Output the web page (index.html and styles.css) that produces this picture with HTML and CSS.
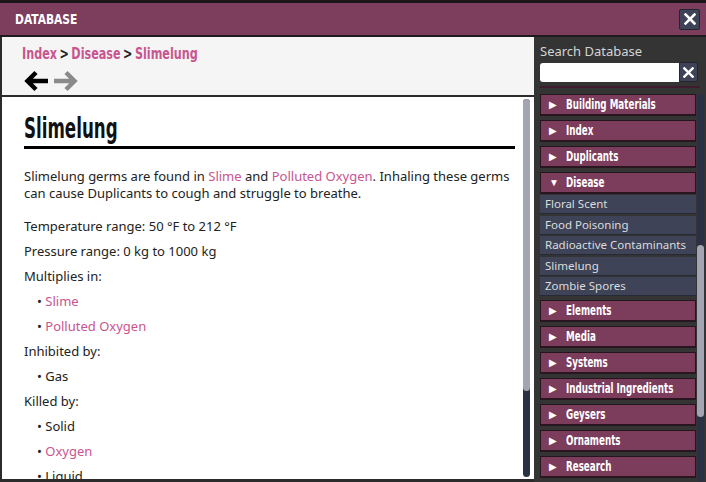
FILE: index.html
```html
<!DOCTYPE html>
<html lang="en">
<head>
  <meta charset="UTF-8" />
  <title>Database</title>
  <link rel="stylesheet" href="styles.css">
</head>
<body>
  <div class="window">
    <!-- Title Bar -->
    <div class="titlebar">
      <span class="title pixel">DATABASE</span>
      <button class="close-btn" aria-label="Close">
        <svg width="12" height="12" viewBox="0 0 12 12"><path d="M1.5 1.5 L10.5 10.5 M10.5 1.5 L1.5 10.5" stroke="#fff" stroke-width="2.6" stroke-linecap="square"/></svg>
      </button>
    </div>

    <div class="panes">
      <!-- Left: Article -->
      <div class="main">
        <div class="crumbs">
          <div class="crumb-path pixel">
            <a href="#">Index</a><span class="sep">&gt;</span><a href="#">Disease</a><span class="sep">&gt;</span><a href="#">Slimelung</a>
          </div>
          <div class="nav-arrows">
            <svg width="27" height="22" viewBox="0 0 27 22"><path d="M6 11 H26 M14 2.5 L5.5 11 L14 19.5" fill="none" stroke="#000" stroke-width="4.5"/></svg>
            <svg width="27" height="22" viewBox="0 0 27 22"><path d="M1 11 H21 M13 2.5 L21.5 11 L13 19.5" fill="none" stroke="#8a8a8a" stroke-width="4.5"/></svg>
          </div>
        </div>

        <div class="content">
          <div class="article">
            <h1><span class="pixel">Slimelung</span></h1>
            <p class="intro">Slimelung germs are found in <a href="#">Slime</a> and <a href="#">Polluted Oxygen</a>. Inhaling these germs can cause Duplicants to cough and struggle to breathe.</p>
            <div class="line">Temperature range: 50 °F to 212 °F</div>
            <div class="line">Pressure range: 0 kg to 1000 kg</div>
            <div class="line">Multiplies in:</div>
            <div class="line bullet">• <a href="#">Slime</a></div>
            <div class="line bullet">• <a href="#">Polluted Oxygen</a></div>
            <div class="line">Inhibited by:</div>
            <div class="line bullet">• Gas</div>
            <div class="line">Killed by:</div>
            <div class="line bullet">• Solid</div>
            <div class="line bullet">• <a href="#">Oxygen</a></div>
            <div class="line bullet">• Liquid</div>
          </div>
          <div class="scrollbar main-scroll">
            <div class="thumb"></div>
          </div>
        </div>
      </div>

      <!-- Right: Sidebar -->
      <div class="sidebar">
        <div class="search-label">Search Database</div>
        <div class="search-row">
          <input type="text" class="search-input">
          <button class="clear-btn" aria-label="Clear">
            <svg width="11" height="11" viewBox="0 0 12 12"><path d="M1.5 1.5 L10.5 10.5 M10.5 1.5 L1.5 10.5" stroke="#fff" stroke-width="2.6" stroke-linecap="square"/></svg>
          </button>
        </div>
        <div class="divider"></div>

        <div class="list-wrap">
          <ul class="cat-list">
            <li class="cat"><span class="tri">&#9654;</span><span class="pixel">Building Materials</span></li>
            <li class="cat"><span class="tri">&#9654;</span><span class="pixel">Index</span></li>
            <li class="cat"><span class="tri">&#9654;</span><span class="pixel">Duplicants</span></li>
            <li class="cat open"><span class="tri">&#9660;</span><span class="pixel">Disease</span></li>
            <li class="sub">Floral Scent</li>
            <li class="sub">Food Poisoning</li>
            <li class="sub">Radioactive Contaminants</li>
            <li class="sub">Slimelung</li>
            <li class="sub last">Zombie Spores</li>
            <li class="cat"><span class="tri">&#9654;</span><span class="pixel">Elements</span></li>
            <li class="cat"><span class="tri">&#9654;</span><span class="pixel">Media</span></li>
            <li class="cat"><span class="tri">&#9654;</span><span class="pixel">Systems</span></li>
            <li class="cat"><span class="tri">&#9654;</span><span class="pixel">Industrial Ingredients</span></li>
            <li class="cat"><span class="tri">&#9654;</span><span class="pixel">Geysers</span></li>
            <li class="cat"><span class="tri">&#9654;</span><span class="pixel">Ornaments</span></li>
            <li class="cat"><span class="tri">&#9654;</span><span class="pixel">Research</span></li>
          </ul>
          <div class="scrollbar side-scroll">
            <div class="thumb"></div>
          </div>
        </div>
      </div>
    </div>
  </div>
</body>
</html>
```

FILE: styles.css
```css
/* Reset and Base Styles */
* {
  margin: 0;
  padding: 0;
  box-sizing: border-box;
}
body {
  font-family: "Noto Sans", sans-serif;
  background-color: #1b1719;
  color: #222;
  width: 706px;
  height: 482px;
  overflow: hidden;
}
a {
  color: #c8558f;
  text-decoration: none;
}

/* Condensed "game" lettering */
.pixel {
  display: inline-block;
  font-family: "DejaVu Sans Condensed", "DejaVu Sans", sans-serif;
  font-weight: bold;
  white-space: nowrap;
  transform-origin: left center;
}

/* Window Frame */
.window {
  height: 100%;
  padding-top: 3px;
  display: flex;
  flex-direction: column;
}
.titlebar {
  height: 34px;
  background-color: #7d3d5d;
  border-bottom: 2px solid #1e1a1d;
  padding: 0 6px 0 15px;
  display: flex;
  align-items: center;
  justify-content: space-between;
}
.title {
  font-size: 14px;
  color: #fff;
  transform: scaleX(0.85);
}
.close-btn,
.clear-btn {
  width: 21px;
  height: 21px;
  background-color: #3e4357;
  border: 1px solid #23252f;
  border-radius: 2px;
  display: flex;
  align-items: center;
  justify-content: center;
}

.panes {
  flex: 1;
  display: flex;
  min-height: 0;
}

/* Left Article Pane */
.main {
  width: 536px;
  border-left: 2px solid #2b2b2b;
  border-bottom: 3px solid #2b2b2b;
  display: flex;
  flex-direction: column;
}
.crumbs {
  height: 60px;
  background-color: #f5f5f5;
  border-bottom: 2px solid #2b2b2b;
  padding: 5px 20px 0;
}
.crumb-path {
  font-size: 15px;
  line-height: 18px;
  transform: scaleX(0.83);
}
.crumb-path .sep {
  color: #222;
  margin: 0 3px;
}
.nav-arrows {
  margin-top: 6px;
  display: flex;
  gap: 4px;
}

.content {
  flex: 1;
  background-color: #fff;
  display: flex;
  min-height: 0;
  overflow: hidden;
}
.article {
  flex: 1;
  padding: 14px 8px 0 22px;
  font-size: 13px;
}
.article h1 {
  font-size: 29px;
  line-height: 32px;
  color: #111;
  padding-bottom: 2px;
  border-bottom: 3px solid #000;
}
.article h1 .pixel {
  transform: scaleX(0.64);
}
.intro {
  margin-top: 19px;
  line-height: 17px;
  margin-bottom: 12px;
}
.line {
  line-height: 25px;
  white-space: nowrap;
}
.bullet {
  padding-left: 13px;
}

/* Scrollbars */
.scrollbar {
  width: 7px;
  border-radius: 4px;
  background-color: #2b3145;
  display: flex;
  flex-direction: column;
}
.scrollbar .thumb {
  background-color: #a3a5b3;
  border-radius: 4px;
}
.main-scroll {
  margin: 2px 4px 2px 0;
}
.main-scroll .thumb {
  height: 292px;
}

/* Sidebar */
.sidebar {
  flex: 1;
  background-color: #343434;
  padding: 5px 2px 0 6px;
  display: flex;
  flex-direction: column;
}
.search-label {
  color: #d4d4d4;
  font-size: 13px;
  line-height: 18px;
}
.search-row {
  margin-top: 2px;
  display: flex;
  align-items: center;
}
.search-input {
  width: 139px;
  height: 19px;
  border: none;
  border-radius: 3px 0 0 3px;
  background-color: #fff;
}
.clear-btn {
  width: 19px;
  height: 20px;
}
.divider {
  height: 2px;
  margin: 4px 4px 0 0;
  background-color: #3e1c2d;
}

.list-wrap {
  flex: 1;
  margin-top: 6px;
  display: flex;
  min-height: 0;
  overflow: hidden;
}
.cat-list {
  list-style: none;
  width: 156px;
}
.cat {
  height: 22px;
  margin-bottom: 4px;
  background-color: #7c3c5c;
  border: 1px solid #25161e;
  border-bottom: 2px solid #2a1620;
  color: #fff;
  font-size: 13.5px;
  line-height: 19px;
  display: flex;
  align-items: center;
  overflow: hidden;
}
.cat .pixel {
  transform: scaleX(0.72);
}
.cat.open {
  margin-bottom: 1px;
}
.tri {
  flex: none;
  font-size: 10px;
  width: 25px;
  padding-left: 8px;
}
.sub {
  height: 19px;
  margin-bottom: 1.5px;
  background-color: #3e4357;
  border-bottom: 1px solid #262a37;
  color: #dcdcdc;
  font-size: 11.5px;
  line-height: 18px;
  padding-left: 5px;
}
.sub.last {
  margin-bottom: 4px;
}
.side-scroll {
  margin-left: 1px;
}
.side-scroll .thumb {
  margin-top: 151px;
  height: 172px;
}
```
